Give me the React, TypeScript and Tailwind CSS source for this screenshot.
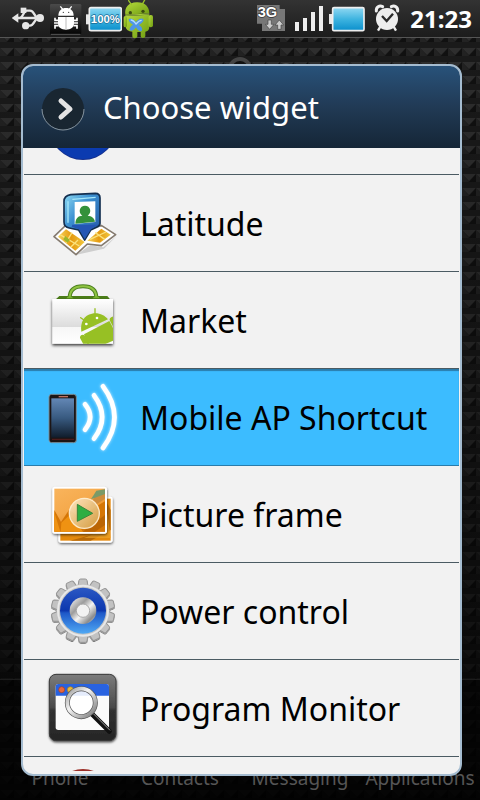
import React from 'react';
import clsx from 'clsx';

interface WidgetItem {
  label: string;
  icon: React.ReactNode;
  selected?: boolean;
}

const DOCK_LABELS = ['Phone', 'Contacts', 'Messaging', 'Applications'];
const GEAR_TEETH = Array.from({ length: 14 }, (_, i) => (i * 360) / 14);

/* Status bar icons */

const UsbIcon = () => (
  <svg className="h-[38px] w-[34px]" viewBox="36 0 102 114" fill="#e6e6e6" aria-hidden="true">
    <path d="M35 54 55 40v28z" />
    <circle cx="120" cy="54" r="12" />
    <circle cx="77" cy="77" r="11" />
    <rect x="62" y="23" width="17" height="16" />
    <path d="M50 54h66M60 54c10-2 10-22 20-22h10c14 0 12 20 24 22M80 77h10c12 0 14-20 24-23" fill="none" stroke="#e6e6e6" strokeWidth="7" />
  </svg>
);

const DebugIcon = () => (
  <svg className="h-[38px] w-8" viewBox="150 0 96 114" aria-hidden="true">
    <defs>
      <linearGradient id="debugBg" x1="0" y1="0" x2="0" y2="1">
        <stop offset="0" stopColor="#4a4a4a" />
        <stop offset="1" stopColor="#050505" />
      </linearGradient>
    </defs>
    <rect x="150" y="12" width="94" height="91" rx="4" fill="url(#debugBg)" />
    <path d="M153 103h88" stroke="#777" strokeWidth="2" />
    <g fill="#fff">
      <path d="M175 47c0-15 10-23 23-23s23 8 23 23z" />
      <path d="M174 51h48v18c0 14-10 20-24 20s-24-6-24-20z" />
      <path d="m181 19 8 10M215 19l-8 10" stroke="#fff" strokeWidth="4" />
      <path d="M176 61h-11v-8M176 69h-14M176 77h-11v9M220 61h11v-8M220 69h14M220 77h11v9" fill="none" stroke="#fff" strokeWidth="5" />
    </g>
    <path d="M198 51v38" stroke="#bbb" strokeWidth="3" />
    <circle cx="190" cy="37" r="2" fill="#333" />
    <circle cx="206" cy="37" r="2" fill="#333" />
  </svg>
);

const BatteryGradient = ({ id }: { id: string }) => (
  <defs>
    <linearGradient id={id} x1="0" y1="0" x2="0" y2="1">
      <stop offset="0" stopColor="#90d8f2" />
      <stop offset="0.5" stopColor="#3eb4e0" />
      <stop offset="1" stopColor="#0a8fcc" />
    </linearGradient>
  </defs>
);

const BatteryPercentIcon = () => (
  <svg className="h-[38px] w-9" viewBox="258 0 108 114" aria-hidden="true">
    <BatteryGradient id="batteryPercent" />
    <path d="M258 43h10v30h-10z" fill="#e8e8e8" />
    <rect x="268" y="23" width="96" height="69" rx="5" fill="url(#batteryPercent)" stroke="#eee" strokeWidth="5" />
    <text x="316" y="70" textAnchor="middle" fill="#fff" stroke="#1a6c96" strokeWidth="4" paintOrder="stroke" fontSize="34" fontWeight="700" fontFamily="'Liberation Sans', sans-serif">100%</text>
  </svg>
);

const AndroidIcon = () => (
  <svg className="h-[38px] w-7 overflow-visible" viewBox="378 0 84 114" aria-hidden="true">
    <defs>
      <linearGradient id="droidBody" x1="0" y1="0" x2="1" y2="1">
        <stop offset="0" stopColor="#b5da3c" />
        <stop offset="1" stopColor="#6f9c12" />
      </linearGradient>
    </defs>
    <g fill="url(#droidBody)">
      <path d="M376 44c-3-22 10-36 34-37 24-1 38 13 38 33z" />
      <path d="M376 48l72-4v36c0 10-6 14-12 15v13c0 8-14 8-14 0V96h-10v13c0 8-15 8-15 0V95c-12-1-19-6-20-14z" />
      <rect x="446" y="45" width="13" height="37" rx="6" />
      <rect x="371" y="48" width="10" height="34" rx="5" />
    </g>
    <path d="m386 2 8 12M434 0l-6 11" stroke="#9cc62a" strokeWidth="4" strokeLinecap="round" />
    <path d="M376 46l72-4" stroke="#a8cf3c" strokeWidth="3" />
    <circle cx="391" cy="38" r="5" fill="#3d4c12" />
    <circle cx="429" cy="34" r="5" fill="#3d4c12" />
    <path d="M386 57c8-6 18 4 22 9 4-6 14-14 22-9 3 7-6 13-13 18 7 5 12 10 8 18-8 4-14-5-17-11-4 6-11 13-18 9-3-7 3-13 9-17-7-4-14-10-13-17z" fill="#4f96e8" />
    <path d="M392 60c6 0 12 6 16 12 5-6 11-11 17-11" fill="none" stroke="#b4dcff" strokeWidth="4" />
  </svg>
);

const NetworkIcon = () => (
  <svg className="h-[38px] w-[34px]" viewBox="54 0 102 114" aria-hidden="true">
    <path d="M57 15h68v12h16v66H72V71H57z" fill="#777" />
    <text x="59" y="52" fill="#fff" stroke="#333" strokeWidth="4" paintOrder="stroke" fontSize="44" fontWeight="700" fontFamily="'Liberation Sans', sans-serif">3G</text>
    <path d="M90 60h10v13h8L95 88 82 73h8zM119 88h10V75h8l-13-15-13 15h8z" fill="#ccc" stroke="#444" strokeWidth="2" />
  </svg>
);

const SignalIcon = () => (
  <svg className="h-[38px] w-[30px]" viewBox="168 0 90 114" fill="#eee" aria-hidden="true">
    <path d="M171 66h12v27h-12zM195 54h12v39h-12zM219 36h12v57h-12zM243 18h12v75h-12z" />
  </svg>
);

const BatteryIcon = () => (
  <svg className="h-[38px] w-10" viewBox="270 0 120 114" aria-hidden="true">
    <BatteryGradient id="batteryFull" />
    <path d="M273 42h10v30h-10z" fill="#e8e8e8" />
    <rect x="284" y="23" width="94" height="69" rx="4" fill="url(#batteryFull)" stroke="#eee" strokeWidth="5" />
  </svg>
);

const AlarmIcon = () => (
  <svg className="h-[38px] w-[30px]" viewBox="396 0 90 114" aria-hidden="true">
    <path d="M409 33c-1-11 9-18 19-13M473 33c1-11-9-18-19-13" fill="none" stroke="#eee" strokeWidth="9" strokeLinecap="round" />
    <path d="m421 80-7 12M461 80l7 12" stroke="#eee" strokeWidth="7" />
    <circle cx="441" cy="57" r="33" fill="#eee" />
    <path d="m426 48 14 15 19-22" fill="none" stroke="#2b2b2b" strokeWidth="7" />
  </svg>
);

/* Widget icons */

const LatitudeIcon = () => (
  <svg className="size-[90px]" viewBox="0 -6 270 270" aria-hidden="true">
    <defs>
      <linearGradient id="latPin" x1="0" y1="0" x2="1" y2="1">
        <stop offset="0" stopColor="#8fdcf5" />
        <stop offset="0.4" stopColor="#3b8fd0" />
        <stop offset="1" stopColor="#2050a0" />
      </linearGradient>
      <linearGradient id="latMap" x1="0" y1="0" x2="1" y2="0">
        <stop offset="0" stopColor="#f6d45a" />
        <stop offset="0.5" stopColor="#e59a10" />
        <stop offset="1" stopColor="#f0c840" />
      </linearGradient>
    </defs>
    <path d="m110 224 40-28 40 6 42-36-40 40z" fill="#000" opacity=".15" />
    <path d="M75 138 42 170l66 54 34-32 42 5 43-33-42-27z" fill="#fff" stroke="#857b70" strokeWidth="5" strokeLinejoin="round" />
    <path d="m78 148-24 22 52 42 28-26z" fill="url(#latMap)" />
    <path d="m184 146 28 18-32 24-38-6z" fill="url(#latMap)" />
    <path d="m60 164 58 34M96 158l-18 30M114 180l-22 22" stroke="#fbe27a" strokeWidth="4" />
    <path d="m76 168 14 12-8 8-12-10z" fill="#9cb52c" />
    <path d="m150 178 48-22M166 158l28 20" stroke="#fbe27a" strokeWidth="4" />
    <path d="M92 44 166 40q14 0 14 14v76q0 8-10 12l-18 8-18 30-18-30-28-6q-16-3-16-18V64q0-16 20-20z" fill="url(#latPin)" stroke="#142f50" strokeWidth="5" strokeLinejoin="round" />
    <path d="M97 134h76l-20 14-19 30-17-30-22-8z" fill="#2456b4" />
    <path d="M84 64v64M97 58l70-6" fill="none" stroke="#a6e8fa" strokeWidth="4" />
    <path d="m104 66 62-2v62l-62 6z" fill="#fff" />
    <path d="M106 131c1-18 9-23 21-24-14-10-8-30 8-30s22 20 8 30c12 1 20 6 22 18z" fill="#34913a" />
  </svg>
);

const MarketIcon = () => (
  <svg className="size-[90px]" viewBox="0 -3 270 270" aria-hidden="true">
    <defs>
      <linearGradient id="bag" x1="0" y1="0" x2="0" y2="1">
        <stop offset="0" stopColor="#fff" />
        <stop offset="0.62" stopColor="#dcdcdc" />
        <stop offset="0.63" stopColor="#f6f6f6" />
        <stop offset="1" stopColor="#fff" />
      </linearGradient>
      <clipPath id="bagClip">
        <path d="M37 69h182v134H37z" />
      </clipPath>
      <filter id="bagShadow" x="-20%" y="-20%" width="140%" height="140%">
        <feDropShadow dx="0" dy="5" stdDeviation="4" floodOpacity=".8" />
      </filter>
    </defs>
    <path d="M58 60h144l10 12H45z" fill="#4b7d18" />
    <g filter="url(#bagShadow)">
      <path d="M37 69h182v134H37z" fill="url(#bag)" />
    </g>
    <path d="M89 66c0-26 16-35 40-35s40 9 40 35" fill="none" stroke="#4d8020" strokeWidth="12" />
    <path d="M89 66c0-26 16-35 40-35s40 9 40 35" fill="none" stroke="#8fc442" strokeWidth="6" />
    <path d="M79 67q4-6 10-6t11 6zM158 67q4-6 11-6t11 6z" fill="#77b32e" />
    <g clipPath="url(#bagClip)">
      <g fill="#97c024">
        <path d="M124 167c-4-28 8-50 32-54 20-4 38 5 48 17z" />
        <path d="m132 175 76-40 28 52-70 30h-20z" />
        <rect x="118" y="177" width="16" height="56" rx="8" transform="rotate(-28 126 180)" />
        <rect x="207" y="124" width="18" height="56" rx="8" transform="rotate(-28 214 127)" />
      </g>
      <path d="m133 133-11-8M165 114V98" stroke="#97c024" strokeWidth="4" strokeLinecap="round" />
      <circle cx="139" cy="144" r="4" fill="#fff" />
      <circle cx="171" cy="126" r="4" fill="#fff" />
    </g>
  </svg>
);

const MobileApIcon = () => (
  <svg className="size-[90px]" viewBox="0 6 270 270" aria-hidden="true">
    <defs>
      <linearGradient id="phoneScreen" x1="0" y1="0" x2="0" y2="1">
        <stop offset="0" stopColor="#6387b5" />
        <stop offset="0.5" stopColor="#385a80" />
        <stop offset="1" stopColor="#101c2b" />
      </linearGradient>
      <filter id="waveGlow" x="-30%" y="-20%" width="160%" height="140%">
        <feDropShadow dx="0" dy="0" stdDeviation="4" floodColor="#fff" floodOpacity=".8" />
      </filter>
    </defs>
    <rect x="27" y="73" width="82" height="145" rx="8" fill="#1c1515" stroke="#77909c" strokeWidth="3" />
    <rect x="34" y="85" width="68" height="118" fill="url(#phoneScreen)" />
    <path d="M56 80h28" stroke="#c07060" strokeWidth="4" />
    <path d="M36 208h66" stroke="#5a1d1d" strokeWidth="3" />
    <g fill="none" stroke="#fff" strokeWidth="14" strokeLinecap="round" filter="url(#waveGlow)">
      <path d="M135 103q31 38 0 76" />
      <path d="M162 76q49 66 0 130" />
      <path d="M189 49q69 93 0 185" />
    </g>
  </svg>
);

const PictureFrameIcon = () => (
  <svg className="size-[90px]" viewBox="0 -3 270 270" aria-hidden="true">
    <defs>
      <linearGradient id="photo" x1="0" y1="0" x2="0.6" y2="1">
        <stop offset="0" stopColor="#f9b45c" />
        <stop offset="0.5" stopColor="#f5a94b" />
        <stop offset="1" stopColor="#e07a06" />
      </linearGradient>
      <linearGradient id="playDisc" x1="0" y1="0" x2="1" y2="1">
        <stop offset="0" stopColor="#ffe9c8" />
        <stop offset="1" stopColor="#d5a044" />
      </linearGradient>
      <filter id="frameShadow" x="-20%" y="-20%" width="140%" height="140%">
        <feDropShadow dx="1" dy="4" stdDeviation="3" floodOpacity=".6" />
      </filter>
    </defs>
    <g filter="url(#frameShadow)">
      <rect x="55" y="80" width="163" height="138" rx="7" fill="#fff" />
      <rect x="61" y="86" width="151" height="126" fill="#e58a10" />
    </g>
    <path d="m202 100 10 20v60l-60 32H90l110-30z" fill="#b96a08" />
    <path d="M202 130c-2 40-30 60-70 74h80" fill="#f0a52a" opacity=".7" />
    <g filter="url(#frameShadow)">
      <rect x="37" y="50" width="164" height="141" rx="8" fill="#fff" />
    </g>
    <rect x="43" y="56" width="152" height="129" fill="url(#photo)" />
    <path d="m43 120 20 36 24-36 30 20 78-46v91H43z" fill="#d57606" />
    <path d="m43 126 18 59H43zM64 158l32-30 32 57H62z" fill="#ef9212" />
    <path d="m195 60-34 24-12 32 46-30z" fill="#cf8c3c" />
    <path d="m195 58-26 4-16 26 42-16z" fill="#7a9a68" />
    <path d="m128 185 67-50v30l-30 20z" fill="#bb6504" />
    <circle cx="133" cy="130" r="45" fill="url(#playDisc)" stroke="#fff0d4" strokeWidth="4" opacity=".93" />
    <path d="m112 103 46 27-46 24z" fill="#2fae42" stroke="#39853a" strokeWidth="3" strokeLinejoin="round" />
  </svg>
);

const PowerControlIcon = () => (
  <svg className="size-[90px]" viewBox="0 0 270 270" aria-hidden="true">
    <defs>
      <linearGradient id="gearBlue" x1="0" y1="0" x2="0" y2="1">
        <stop offset="0" stopColor="#2b58c4" />
        <stop offset="0.5" stopColor="#0c37ae" />
        <stop offset="0.55" stopColor="#1e58c8" />
        <stop offset="1" stopColor="#4fa8f4" />
      </linearGradient>
      <linearGradient id="gearHub" x1="0" y1="0" x2="1" y2="1">
        <stop offset="0" stopColor="#fff" />
        <stop offset="0.35" stopColor="#9c9c9c" />
        <stop offset="0.55" stopColor="#f4f4f4" />
        <stop offset="0.8" stopColor="#8c8c8c" />
        <stop offset="1" stopColor="#eee" />
      </linearGradient>
      <filter id="gearShadow" x="-20%" y="-20%" width="140%" height="140%">
        <feDropShadow dx="0" dy="3" stdDeviation="2" floodOpacity=".5" />
      </filter>
    </defs>
    <g filter="url(#gearShadow)">
      {GEAR_TEETH.map((angle) => (
        <path key={angle} d="m113 66 4-23q1-4 5-4h14q4 0 5 4l4 23z" fill="#c2c2c2" stroke="#969696" strokeWidth="3" transform={`rotate(${angle} 129 134)`} />
      ))}
      <circle cx="129" cy="134" r="79" fill="#c4c4c4" />
    </g>
    <circle cx="129" cy="134" r="75" fill="none" stroke="#e8e8e8" strokeWidth="6" />
    <circle cx="129" cy="134" r="69" fill="url(#gearBlue)" />
    <circle cx="129" cy="134" r="40" fill="url(#gearHub)" />
    <circle cx="129" cy="134" r="20" fill="#f2f2f2" stroke="#aaa" strokeWidth="3" />
  </svg>
);

const ProgramMonitorIcon = () => (
  <svg className="size-[90px]" viewBox="0 3 270 270" aria-hidden="true">
    <defs>
      <linearGradient id="monitorBg" x1="0" y1="0" x2="0" y2="1">
        <stop offset="0" stopColor="#7c7c7c" />
        <stop offset="0.5" stopColor="#4a4a4a" />
        <stop offset="0.55" stopColor="#303030" />
        <stop offset="1" stopColor="#262626" />
      </linearGradient>
      <linearGradient id="lensRing" x1="0" y1="0" x2="1" y2="1">
        <stop offset="0" stopColor="#999" />
        <stop offset="0.4" stopColor="#f4f4f4" />
        <stop offset="1" stopColor="#777" />
      </linearGradient>
      <filter id="monitorShadow" x="-20%" y="-20%" width="140%" height="140%">
        <feDropShadow dx="1" dy="4" stdDeviation="3" floodOpacity=".7" />
      </filter>
    </defs>
    <rect x="28" y="37" width="200" height="199" rx="20" fill="url(#monitorBg)" stroke="#3a3a3a" strokeWidth="3" filter="url(#monitorShadow)" />
    <rect x="47" y="66" width="160" height="138" rx="8" fill="#fafafa" />
    <path d="M47 101V74q0-8 8-8h144q8 0 8 8v27z" fill="#2862e0" />
    <circle cx="65" cy="83" r="9" fill="#e8663c" stroke="#a03c20" strokeWidth="2" />
    <circle cx="91" cy="83" r="9" fill="#e8b83c" stroke="#a07820" strokeWidth="2" />
    <path d="m156 156 52 52" stroke="#111" strokeWidth="15" strokeLinecap="round" />
    <path d="m160 155 50 50" stroke="#999" strokeWidth="3" />
    <circle cx="124" cy="122" r="42" fill="#fff" fillOpacity=".88" stroke="#555" strokeWidth="15" />
    <circle cx="124" cy="122" r="42" fill="none" stroke="url(#lensRing)" strokeWidth="11" />
  </svg>
);

/* Neighbouring rows of the scrolled list, only their edges are visible */

const BlueDiscIcon = () => (
  <svg className="size-[90px]" viewBox="0 0 90 90" aria-hidden="true">
    <circle cx="43" cy="45" r="34" fill="#16308c" />
    <circle cx="43" cy="44" r="34" fill="#0b3bb0" />
  </svg>
);

const RedDiscIcon = () => (
  <svg className="size-[90px]" viewBox="0 0 90 90" aria-hidden="true">
    <circle cx="43" cy="38" r="30" fill="#9c2f28" />
  </svg>
);

const WIDGETS: WidgetItem[] = [
  { label: 'Latitude', icon: <LatitudeIcon /> },
  { label: 'Market', icon: <MarketIcon /> },
  { label: 'Mobile AP Shortcut', icon: <MobileApIcon />, selected: true },
  { label: 'Picture frame', icon: <PictureFrameIcon /> },
  { label: 'Power control', icon: <PowerControlIcon /> },
  { label: 'Program Monitor', icon: <ProgramMonitorIcon /> },
];

const Wallpaper = () => (
  <svg className="absolute inset-0 h-full w-full" aria-hidden="true">
    <defs>
      <pattern id="studs" width="14" height="14" patternUnits="userSpaceOnUse">
        <rect width="14" height="14" fill="#191919" />
        <path d="M0 6h14l-7 7z" fill="#303030" />
        <path d="M0 6v8h7z" fill="#242424" />
        <path d="M14 6v8H7z" fill="#111" />
        <path d="M0 0h14v6H0z" fill="#1b1b1b" />
      </pattern>
      <linearGradient id="dim" x1="0" y1="0" x2="0" y2="1">
        <stop offset="0" stopColor="#000" stopOpacity="0" />
        <stop offset="0.5" stopColor="#000" stopOpacity=".35" />
        <stop offset="1" stopColor="#000" stopOpacity=".8" />
      </linearGradient>
    </defs>
    <rect width="100%" height="100%" fill="url(#studs)" />
    <rect width="100%" height="100%" fill="url(#dim)" />
  </svg>
);

const StatusBar = () => (
  <header className="relative flex h-[38px] items-center justify-between border-b border-[#555] bg-linear-to-b from-[#333] to-[#1c1c1c] pr-2 pl-3">
    <div className="flex items-center gap-1">
      <UsbIcon />
      <DebugIcon />
      <BatteryPercentIcon />
      <AndroidIcon />
    </div>
    <div className="flex items-center gap-1">
      <NetworkIcon />
      <SignalIcon />
      <BatteryIcon />
      <AlarmIcon />
      <time className="pl-1 text-2xl font-bold text-white">21:23</time>
    </div>
  </header>
);

const HomeScreen = () => (
  <div className="relative flex flex-1 flex-col justify-between">
    <div className="flex items-center justify-center gap-7 pt-[19px]">
      <span className="size-3 rounded-full bg-[#4a4a4a]" />
      <span className="size-6 rounded-full border-4 border-[#444] bg-[#111]" />
      <span className="size-3 rounded-full bg-[#4a4a4a]" />
    </div>
    <nav className="grid h-[121px] grid-cols-4 items-end border-t border-[#1c1c1c] bg-black/40 pb-2">
      {DOCK_LABELS.map((label) => (
        <a key={label} href="#" className="text-center text-[19px] text-[#555]">
          {label}
        </a>
      ))}
    </nav>
  </div>
);

const WidgetRow: React.FC<WidgetItem> = ({ label, icon, selected }) => (
  <li className={clsx('border-b', selected ? 'border-[#2a7cab]' : 'border-[#4b5b63]')}>
    <button
      type="button"
      className={clsx(
        'flex h-24 w-full items-center gap-2.5 pl-4 text-left text-[32px] whitespace-nowrap text-black',
        selected && 'bg-[#3cbcff] shadow-[inset_0_2px_1px_#2a7cab]',
      )}
    >
      {icon}
      <span className="pt-0.5">{label}</span>
    </button>
  </li>
);

const WidgetDialog = () => (
  <section
    role="dialog"
    aria-labelledby="dialog-title"
    className="flex flex-1 flex-col overflow-hidden rounded-xl border-2 border-[#a5bcd0] bg-[#f2f2f2] pb-[3px]"
  >
    <div className="flex h-[82px] shrink-0 items-center gap-[18px] bg-linear-to-b from-[#28527a] via-[#213a55] to-[#152637] pl-[18px] text-white">
      <svg className="mt-1 size-11" viewBox="0 0 44 44" aria-hidden="true">
        <circle cx="22" cy="22" r="21" fill="#192631" />
        <path d="M1 22a21 21 0 0 0 42 0" fill="none" stroke="#8795a0" strokeWidth="1" />
        <path d="m20 14 9 8-9 8" fill="none" stroke="#e4e4e4" strokeWidth="5" strokeLinecap="round" strokeLinejoin="round" />
      </svg>
      <h1 id="dialog-title" className="text-[31px]">Choose widget</h1>
    </div>
    <div className="min-h-0 flex-1 overflow-hidden px-px">
      <ul className="-mt-[70px]">
        <li className="flex h-[97px] items-center border-b border-[#4b5b63] pl-4">
          <BlueDiscIcon />
        </li>
        {WIDGETS.map((widget) => (
          <WidgetRow key={widget.label} {...widget} />
        ))}
        <li className="flex h-[97px] items-center pl-4">
          <RedDiscIcon />
        </li>
      </ul>
    </div>
  </section>
);

const App = () => {
  return (
    <div className="relative flex h-screen flex-col overflow-hidden bg-black font-['Noto_Sans',sans-serif]">
      <Wallpaper />
      <StatusBar />
      <HomeScreen />
      <div className="absolute inset-0 flex flex-col pt-16 pr-[18px] pb-6 pl-[21px]">
        <WidgetDialog />
      </div>
    </div>
  );
};

export default App;
